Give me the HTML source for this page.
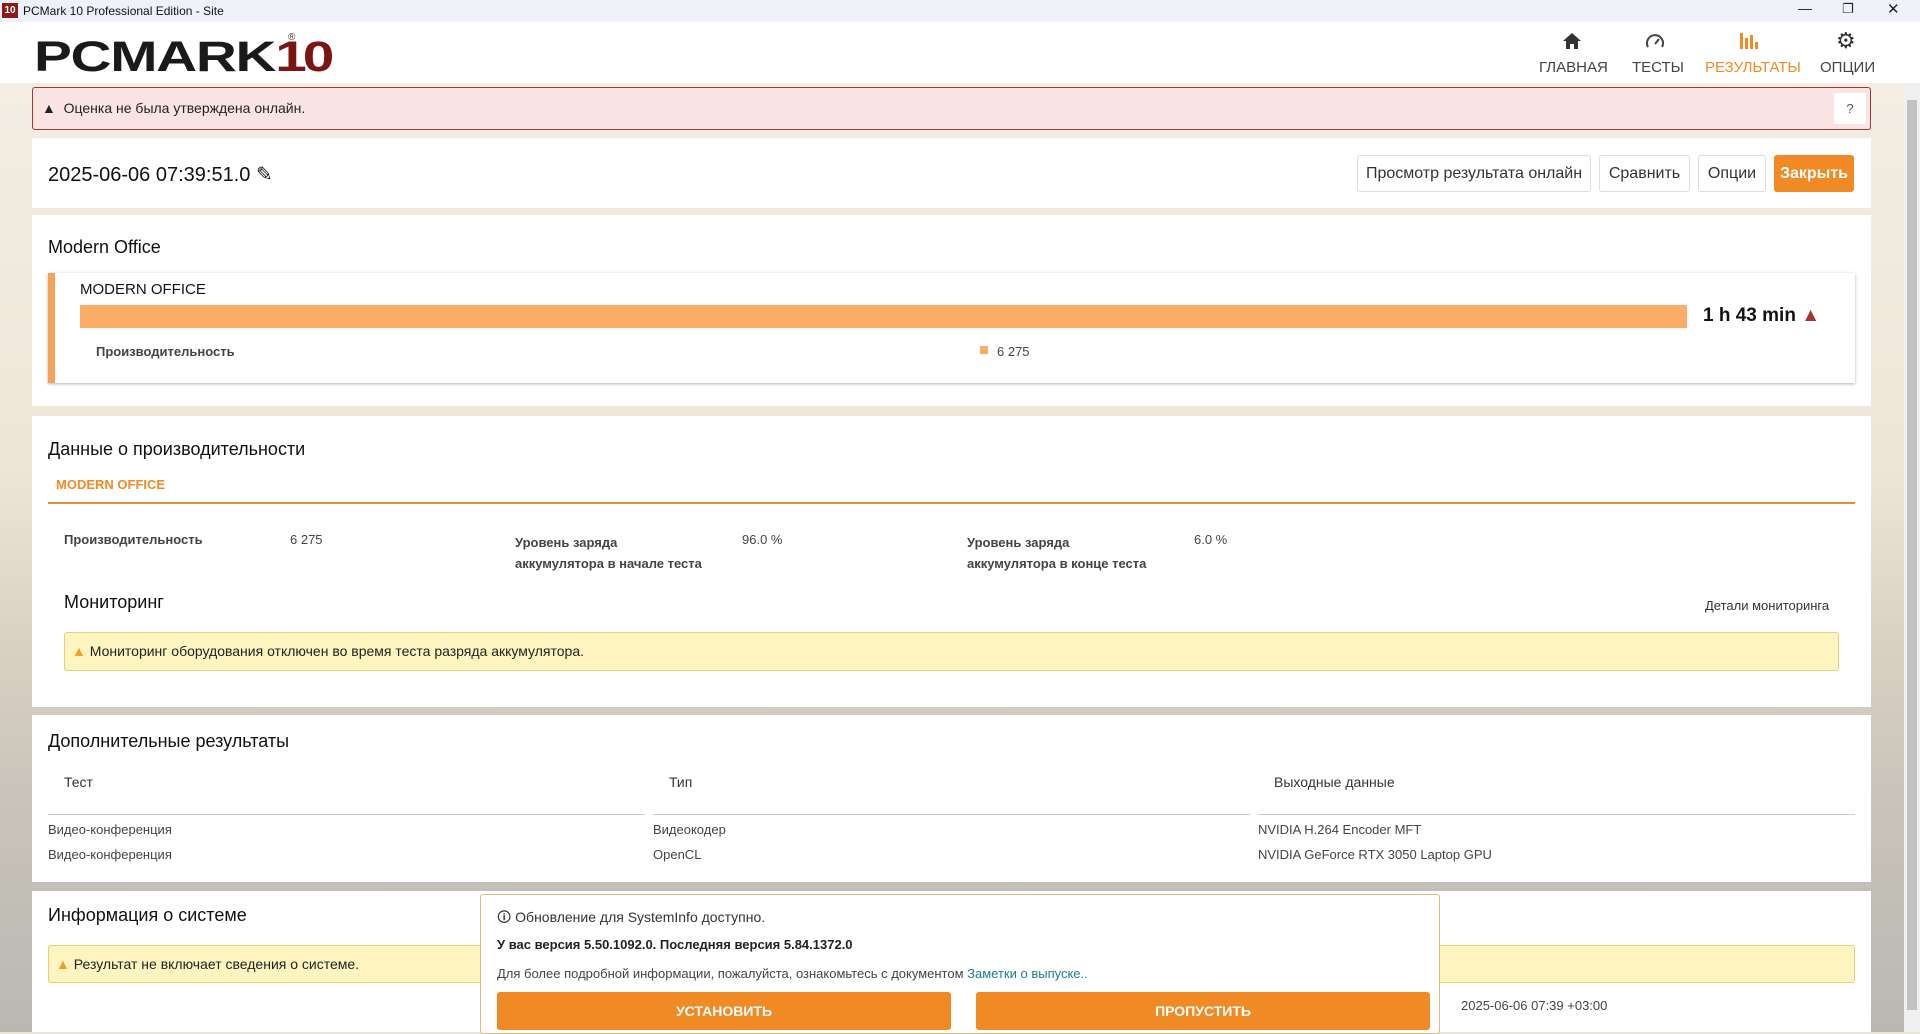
<!DOCTYPE html>
<html><head><meta charset="utf-8"><style>
*{box-sizing:border-box;margin:0;padding:0}
body{width:1920px;height:1032px;overflow:hidden;font-family:"Liberation Sans Narrow","Liberation Sans","DejaVu Sans",sans-serif;color:#222;position:relative;background:#ece4d6}
.a{position:absolute}
.bg{left:0;top:83px;width:1904px;height:949px;background:linear-gradient(180deg,#f3ede3 0%,#eee6d8 40%,#d9d0c2 60%,#c9c4bb 75%,#b9b8b2 100%)}
.card{position:absolute;left:32px;width:1839px;background:#fff}
.t{position:absolute;white-space:nowrap}
.btn{position:absolute;top:155px;height:37px;border:1px solid #ddd;border-radius:3px;background:#fff;font-size:16px;line-height:35px;text-align:center;color:#333}
.sm{font-size:13px;color:#444}
.b{font-weight:bold}
</style></head><body>
<div class="a" style="left:0;top:0;width:1920px;height:22px;background:#eef2f8"></div>
<div class="a" style="left:2px;top:3px;width:16px;height:15px;background:#8b1a1a;color:#fff;font-size:10px;font-weight:bold;text-align:center;line-height:15px;font-family:'Liberation Sans'">10</div>
<div class="t" style="left:23px;top:4px;font-size:12px;color:#111">PCMark 10 Professional Edition - Site</div>
<div class="t" style="left:1798px;top:0;font-size:14px">—</div>
<div class="t" style="left:1842px;top:1px;font-size:13px">❐</div>
<div class="t" style="left:1887px;top:0;font-size:15px">✕</div>
<div class="a" style="left:0;top:22px;width:1920px;height:61px;background:#fff"></div>
<div class="t" style="left:34px;top:33px;font-family:'Liberation Sans';font-weight:900;font-size:43px;letter-spacing:-1px;color:#1a1a1a;transform:scaleX(1.32);transform-origin:left">PCMARK<span style="color:#7a1515;letter-spacing:-3px">10</span></div>
<div class="t" style="left:288px;top:32px;font-size:10px;color:#333">®</div>
<svg class="a" style="left:1562px;top:32px" width="20" height="18" viewBox="0 0 20 18"><path d="M10 1L1 9h3v8h4v-5h4v5h4V9h3z" fill="#333"/></svg>
<div class="t" style="left:1539px;top:59px;font-size:15px;color:#444">ГЛАВНАЯ</div>
<svg class="a" style="left:1644px;top:31px" width="22" height="20" viewBox="0 0 22 20"><path d="M4 16A8 8 0 1 1 18 16" fill="none" stroke="#444" stroke-width="2"/><path d="M11 13l4-5" stroke="#444" stroke-width="2"/></svg>
<div class="t" style="left:1632px;top:59px;font-size:15px;color:#444">ТЕСТЫ</div>
<svg class="a" style="left:1739px;top:32px" width="20" height="18" viewBox="0 0 20 18"><rect x="1" y="1" width="3" height="16" fill="#f08a24"/><rect x="6" y="6" width="3" height="11" fill="#f08a24"/><rect x="11" y="3" width="3" height="14" fill="#f08a24"/><rect x="16" y="10" width="3" height="7" fill="#f08a24"/></svg>
<div class="t" style="left:1705px;top:59px;font-size:15px;color:#f08a24">РЕЗУЛЬТАТЫ</div>
<div class="t" style="left:1836px;top:28px;font-size:22px;color:#333">⚙</div>
<div class="t" style="left:1820px;top:59px;font-size:15px;color:#444">ОПЦИИ</div>
<div class="a bg"></div>
<div class="a" style="left:1904px;top:83px;width:16px;height:949px;background:#f0f0f0"></div>
<div class="a" style="left:1907px;top:100px;width:10px;height:910px;background:#c2c2c2"></div>

<div class="a" style="left:32px;top:87px;width:1839px;height:43px;background:#fae3e3;border:1px solid #9b3a3a;border-radius:3px"></div>
<div class="t" style="left:42px;top:100px;font-size:14px;color:#222">▲&nbsp; Оценка не была утверждена онлайн.</div>
<div class="a" style="left:1834px;top:93px;width:32px;height:31px;background:#fff;border-radius:2px;font-size:13px;text-align:center;line-height:31px;color:#555">?</div>

<div class="card" style="top:138px;height:70px"></div>
<div class="t" style="left:48px;top:162px;font-size:20px;color:#111">2025-06-06 07:39:51.0 ✎</div>
<div class="btn" style="left:1357px;width:234px">Просмотр результата онлайн</div>
<div class="btn" style="left:1599px;width:91px">Сравнить</div>
<div class="btn" style="left:1698px;width:68px">Опции</div>
<div class="btn" style="left:1774px;width:80px;background:#f08a24;border-color:#f08a24;color:#fff;font-weight:bold">Закрыть</div>

<div class="card" style="top:215px;height:191px"></div>
<div class="t" style="left:48px;top:237px;font-size:18px;color:#111">Modern Office</div>
<div class="a" style="left:48px;top:273px;width:1807px;height:110px;background:#fff;border-left:7px solid #f5a35a;box-shadow:0 1px 3px rgba(0,0,0,.3)"></div>
<div class="t" style="left:80px;top:281px;font-size:15px;color:#111">MODERN OFFICE</div>
<div class="a" style="left:80px;top:305px;width:1607px;height:23px;background:#fbad68"></div>
<div class="t" style="left:1703px;top:305px;font-size:19px;font-weight:bold;color:#111">1 h 43 min <span style="color:#a33">▲</span></div>
<div class="t sm b" style="left:96px;top:344px">Производительность</div>
<div class="a" style="left:980px;top:346px;width:8px;height:8px;background:#fbad68"></div>
<div class="t sm" style="left:997px;top:344px">6 275</div>

<div class="card" style="top:416px;height:291px"></div>
<div class="t" style="left:48px;top:439px;font-size:18px;color:#111">Данные о производительности</div>
<div class="t b" style="left:56px;top:477px;font-size:13px;color:#f08a24">MODERN OFFICE</div>
<div class="a" style="left:48px;top:502px;width:1807px;height:2px;background:#e0913e"></div>
<div class="t sm b" style="left:64px;top:532px">Производительность</div>
<div class="t sm" style="left:290px;top:532px">6 275</div>
<div class="t sm b" style="left:515px;top:532px;line-height:21px">Уровень заряда<br>аккумулятора в начале теста</div>
<div class="t sm" style="left:742px;top:532px">96.0 %</div>
<div class="t sm b" style="left:967px;top:532px;line-height:21px">Уровень заряда<br>аккумулятора в конце теста</div>
<div class="t sm" style="left:1194px;top:532px">6.0 %</div>
<div class="t" style="left:64px;top:592px;font-size:18px;color:#111">Мониторинг</div>
<div class="t sm" style="left:1705px;top:598px;color:#333">Детали мониторинга</div>
<div class="a" style="left:64px;top:632px;width:1775px;height:39px;background:#fdf4c0;border:1px solid #e6cf75;border-radius:3px"></div>
<div class="t" style="left:72px;top:643px;font-size:14px;color:#222"><span style="color:#f0a020">▲</span> Мониторинг оборудования отключен во время теста разряда аккумулятора.</div>

<div class="card" style="top:715px;height:167px"></div>
<div class="t" style="left:48px;top:731px;font-size:18px;color:#111">Дополнительные результаты</div>
<div class="t" style="left:64px;top:774px;font-size:14px;color:#333">Тест</div>
<div class="t" style="left:669px;top:774px;font-size:14px;color:#333">Тип</div>
<div class="t" style="left:1274px;top:774px;font-size:14px;color:#333">Выходные данные</div>
<div class="a" style="left:48px;top:814px;width:597px;height:1px;background:#ccc"></div>
<div class="a" style="left:653px;top:814px;width:597px;height:1px;background:#ccc"></div>
<div class="a" style="left:1258px;top:814px;width:597px;height:1px;background:#ccc"></div>
<div class="t sm" style="left:48px;top:822px">Видео-конференция</div>
<div class="t sm" style="left:653px;top:822px">Видеокодер</div>
<div class="t sm" style="left:1258px;top:822px">NVIDIA H.264 Encoder MFT</div>
<div class="t sm" style="left:48px;top:847px">Видео-конференция</div>
<div class="t sm" style="left:653px;top:847px">OpenCL</div>
<div class="t sm" style="left:1258px;top:847px">NVIDIA GeForce RTX 3050 Laptop GPU</div>

<div class="card" style="top:891px;height:141px"></div>
<div class="t" style="left:48px;top:905px;font-size:18px;color:#111">Информация о системе</div>
<div class="a" style="left:48px;top:945px;width:1807px;height:38px;background:#fdf4c0;border:1px solid #e6cf75;border-radius:3px"></div>
<div class="t" style="left:56px;top:956px;font-size:14px;color:#222"><span style="color:#f0a020">▲</span> Результат не включает сведения о системе.</div>
<div class="t sm" style="left:1461px;top:998px">2025-06-06 07:39 +03:00</div>

<div class="a" style="left:480px;top:894px;width:960px;height:140px;background:#fff;border:1px solid #e6b87a;border-radius:3px"></div>
<div class="t" style="left:497px;top:907px;font-size:14px;color:#333">🛈 Обновление для SystemInfo доступно.</div>
<div class="t sm b" style="left:497px;top:937px;color:#222">У вас версия 5.50.1092.0. Последняя версия 5.84.1372.0</div>
<div class="t sm" style="left:497px;top:966px">Для более подробной информации, пожалуйста, ознакомьтесь с документом <span style="color:#1a7f8a">Заметки о выпуске..</span></div>
<div class="a b" style="left:497px;top:992px;width:454px;height:38px;background:#f08a24;border-radius:3px;color:#fff;font-size:14px;text-align:center;line-height:38px">УСТАНОВИТЬ</div>
<div class="a b" style="left:976px;top:992px;width:454px;height:38px;background:#f08a24;border-radius:3px;color:#fff;font-size:14px;text-align:center;line-height:38px">ПРОПУСТИТЬ</div>
</body></html>
